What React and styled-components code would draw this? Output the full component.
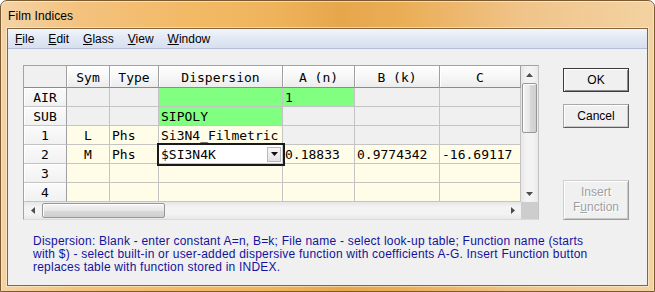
import React from 'react';
import styled, { createGlobalStyle, css } from 'styled-components';

const Global = createGlobalStyle`
  html, body { margin: 0; padding: 0; background: #ffffff; }
  body { width: 655px; height: 292px; overflow: hidden; }
  * { box-sizing: border-box; }
`;

const Window = styled.div`
  width: 655px;
  height: 292px;
  border: 1px solid #7a5a2e;
  border-radius: 7px 7px 0 0;
  background: linear-gradient(90deg, #f4d3a6 0%, #f3c27e 12%, #f2b964 30%, #efb35c 42%, #e6a64c 52%, #eaae57 62%, #f0c48a 80%, #f3d2a2 100%);
  box-shadow: inset 0 1px 0 rgba(255, 255, 255, 0.55), inset 1px 0 0 rgba(255, 255, 255, 0.35), inset -1px 0 0 rgba(255, 255, 255, 0.35);
  display: flex;
  flex-direction: column;
  font-family: "Liberation Sans", Arial, sans-serif;
  color: #000;
`;

const TitleBar = styled.div`
  height: 27px;
  display: flex;
  align-items: center;
  padding-left: 7px;
  padding-top: 2px;
  font-size: 12px;
  letter-spacing: 0.1px;
`;

const Client = styled.div`
  flex: 1;
  margin: 0 6px 5px 6px;
  border: 1px solid #86653a;
  box-shadow: 0 0 0 1px rgba(255, 240, 210, 0.6);
  background: #f0f0f0;
  display: flex;
  flex-direction: column;
`;

const MenuBar = styled.div`
  height: 20px;
  border-bottom: 1px solid #b3bdd3;
  background: linear-gradient(#f2f5fb 0%, #e3e9f5 45%, #d7dff0 100%);
  display: flex;
  align-items: center;
  font-size: 12px;
`;

const MenuItem = styled.span`
  padding: 0 7px;
  u { text-decoration: underline; text-underline-offset: 1px; }
`;

const Body = styled.div`
  flex: 1;
  display: flex;
  flex-direction: column;
  padding: 16px 0 0 15px;
`;

const TopRow = styled.div`
  display: flex;
  align-items: flex-start;
  gap: 24px;
`;

const GridFrame = styled.div`
  width: 516px;
  height: 155px;
  border: 1px solid #a3a3a3;
  border-right-color: #c4c4c4;
  border-bottom-color: #dadada;
  display: grid;
  grid-template-columns: 497px 17px;
  grid-template-rows: 136px 17px;
  background: #f0f0f0;
`;

const Table = styled.div`
  display: grid;
  grid-template-columns: 43px 43px 49px 124px 72px 85px 81px;
  grid-template-rows: 22px;
  grid-auto-rows: 19px;
  overflow: hidden;
  font-family: "DejaVu Sans Mono", "Liberation Mono", monospace;
  font-size: 13px;
`;

const HeadCell = styled.div`
  border-right: 1px solid #a0a0a0;
  border-bottom: 1px solid #8c8c8c;
  background: ${p => (p.$corner ? '#f0f0f0' : 'linear-gradient(#ffffff 0%, #f7f7f7 50%, #ececec 100%)')};
  box-shadow: ${p => (p.$corner ? 'none' : 'inset 1px 0 0 #ffffff')};
  display: flex;
  align-items: center;
  justify-content: center;
  padding-top: 1px;
  white-space: pre;
`;

const RowHead = styled.div`
  border-right: 1px solid #a0a0a0;
  border-bottom: 1px solid #c4c4c4;
  background: linear-gradient(#fbfbfb, #f1f1f1);
  box-shadow: inset 1px 1px 0 #ffffff;
  display: flex;
  align-items: center;
  justify-content: center;
`;

const bgMap = {
  gray: '#f0f0f0',
  green: '#80ff80',
  cream: '#fffde8',
};

const Cell = styled.div`
  border-right: 1px solid #c4c4c4;
  border-bottom: 1px solid #c4c4c4;
  background: ${p => bgMap[p.$bg]};
  display: flex;
  align-items: center;
  justify-content: ${p => (p.$center ? 'center' : 'flex-start')};
  padding-left: ${p => (p.$center ? '0' : '2px')};
  white-space: pre;
  overflow: hidden;
`;

const ComboCell = styled.div`
  position: relative;
  z-index: 1;
  border-right: 1px solid #c4c4c4;
  border-bottom: 1px solid #c4c4c4;
  background: #ffffff;
  outline: 2px solid #1a1a1a;
  outline-offset: 0px;
  display: flex;
  align-items: center;
  padding-left: 2px;
  padding-right: 1px;
`;

const ComboText = styled.span`
  flex: 1;
`;

const DropBtn = styled.div`
  width: 14px;
  height: 15px;
  border: 1px solid #b9b9b9;
  background: linear-gradient(#f8f8f8, #e3e3e3);
  display: flex;
  align-items: center;
  justify-content: center;
`;

const VScroll = styled.div`
  display: flex;
  flex-direction: column;
  background: linear-gradient(90deg, #e6e6e6, #f3f3f3 30%, #f3f3f3 70%, #e9e9e9);
`;

const HScroll = styled.div`
  display: flex;
  flex-direction: row;
  background: linear-gradient(#e6e6e6, #f3f3f3 30%, #f3f3f3 70%, #e9e9e9);
`;

const Arrow = styled.div`
  width: 17px;
  height: 17px;
  flex: none;
  display: flex;
  align-items: center;
  justify-content: center;
`;

const Spacer = styled.div`
  flex: 1;
`;

const thumbBase = css`
  border: 1px solid #979797;
  border-radius: 2px;
  flex: none;
`;

const VThumb = styled.div`
  ${thumbBase}
  width: 15px;
  height: 50px;
  margin: 0 1px;
  background: linear-gradient(90deg, #f4f4f4 0%, #e7e7e7 50%, #d9d9d9 51%, #cfcfcf 100%);
  box-shadow: inset 1px 1px 0 #ffffff;
`;

const HThumb = styled.div`
  ${thumbBase}
  width: 123px;
  height: 15px;
  margin: 1px 0 1px 1px;
  background: linear-gradient(#f4f4f4 0%, #e7e7e7 50%, #d9d9d9 51%, #cfcfcf 100%);
  box-shadow: inset 1px 1px 0 #ffffff;
`;

const Corner = styled.div`
  background: #cdcdcd;
`;

const ButtonCol = styled.div`
  display: flex;
  flex-direction: column;
  padding-top: 3px;
  width: 66px;
`;

const Button = styled.div`
  width: 66px;
  height: ${p => (p.$tall ? '40px' : '24px')};
  margin-top: ${p => p.$gap || 0}px;
  font-size: 12px;
  line-height: 15px;
  text-align: center;
  display: flex;
  flex-direction: column;
  align-items: center;
  justify-content: center;
  background: #f0f0f0;
  color: ${p => (p.$disabled ? '#a0a0a0' : '#000')};
  text-shadow: ${p => (p.$disabled ? '1px 1px 0 #ffffff' : 'none')};
  border: 1px solid ${p => (p.$default ? '#3a3a3a' : p.$disabled ? '#cfcfcf' : '#a8a8a8')};
  border-right-color: ${p => (p.$default ? '#3a3a3a' : p.$disabled ? '#9c9c9c' : '#5c5c5c')};
  border-bottom-color: ${p => (p.$default ? '#3a3a3a' : p.$disabled ? '#9c9c9c' : '#5c5c5c')};
  box-shadow: ${p =>
    p.$default
      ? 'inset 1px 1px 0 #ffffff, inset -1px -1px 0 #8a8a8a'
      : 'inset 1px 1px 0 #ffffff, inset -1px -1px 0 #c8c8c8'};
  u { text-decoration: underline; }
`;

const Note = styled.div`
  margin: 15px 0 0 10px;
  font-size: 12px;
  line-height: 13px;
  letter-spacing: 0.22px;
  color: #13139c;
  white-space: nowrap;
`;

const TriUp = () => (
  <svg width="7" height="4" viewBox="0 0 7 4"><path d="M0 4 L3.5 0 L7 4 Z" fill="#4d4d4d" /></svg>
);
const TriDown = ({ color = '#4d4d4d' }) => (
  <svg width="7" height="4" viewBox="0 0 7 4"><path d="M0 0 L7 0 L3.5 4 Z" fill={color} /></svg>
);
const TriLeft = () => (
  <svg width="4" height="7" viewBox="0 0 4 7"><path d="M4 0 L4 7 L0 3.5 Z" fill="#4d4d4d" /></svg>
);
const TriRight = () => (
  <svg width="4" height="7" viewBox="0 0 4 7"><path d="M0 0 L4 3.5 L0 7 Z" fill="#4d4d4d" /></svg>
);

const headers = ['', 'Sym', 'Type', 'Dispersion', 'A (n)', 'B (k)', 'C'];

const g = { t: '', bg: 'gray' };
const c = { t: '', bg: 'cream' };

const rows = [
  { label: 'AIR', cells: [g, g, { t: '', bg: 'green' }, { t: '1', bg: 'green' }, g, g] },
  { label: 'SUB', cells: [g, g, { t: 'SIPOLY', bg: 'green' }, g, g, g] },
  { label: '1', cells: [{ t: 'L', bg: 'cream' }, { t: 'Phs', bg: 'cream' }, { t: 'Si3N4_Filmetric', bg: 'cream' }, g, g, g] },
  {
    label: '2',
    cells: [
      { t: 'M', bg: 'cream' },
      { t: 'Phs', bg: 'cream' },
      { combo: '$SI3N4K' },
      { t: '0.18833', bg: 'cream' },
      { t: '0.9774342', bg: 'cream' },
      { t: '-16.69117', bg: 'cream' },
    ],
  },
  { label: '3', cells: [c, c, c, c, c, c] },
  { label: '4', cells: [c, c, c, c, c, c] },
];

export default function App() {
  return (
    <>
      <Global />
      <Window>
        <TitleBar>Film Indices</TitleBar>
        <Client>
          <MenuBar>
            <MenuItem><u>F</u>ile</MenuItem>
            <MenuItem><u>E</u>dit</MenuItem>
            <MenuItem><u>G</u>lass</MenuItem>
            <MenuItem><u>V</u>iew</MenuItem>
            <MenuItem><u>W</u>indow</MenuItem>
          </MenuBar>
          <Body>
            <TopRow>
              <GridFrame>
                <Table>
                  {headers.map((h, i) => (
                    <HeadCell key={'h' + i} $corner={i === 0}>{h}</HeadCell>
                  ))}
                  {rows.map(r => (
                    <React.Fragment key={r.label}>
                      <RowHead>{r.label}</RowHead>
                      {r.cells.map((cell, j) =>
                        cell.combo ? (
                          <ComboCell key={j}>
                            <ComboText>{cell.combo}</ComboText>
                            <DropBtn><TriDown color="#111" /></DropBtn>
                          </ComboCell>
                        ) : (
                          <Cell key={j} $bg={cell.bg} $center={j === 0}>{cell.t}</Cell>
                        )
                      )}
                    </React.Fragment>
                  ))}
                </Table>
                <VScroll>
                  <Arrow><TriUp /></Arrow>
                  <VThumb />
                  <Spacer />
                  <Arrow><TriDown /></Arrow>
                </VScroll>
                <HScroll>
                  <Arrow><TriLeft /></Arrow>
                  <HThumb />
                  <Spacer />
                  <Arrow><TriRight /></Arrow>
                </HScroll>
                <Corner />
              </GridFrame>
              <ButtonCol>
                <Button $default>OK</Button>
                <Button $gap={12}>Cancel</Button>
                <Button $gap={52} $tall $disabled>
                  <span>Insert</span>
                  <span>F<u>u</u>nction</span>
                </Button>
              </ButtonCol>
            </TopRow>
            <Note>
              Dispersion: Blank - enter constant A=n, B=k; File name - select look-up table; Function name (starts
              <br />
              with $) - select built-in or user-added dispersive function with coefficients A-G. Insert Function button
              <br />
              replaces table with function stored in INDEX.
            </Note>
          </Body>
        </Client>
      </Window>
    </>
  );
}
